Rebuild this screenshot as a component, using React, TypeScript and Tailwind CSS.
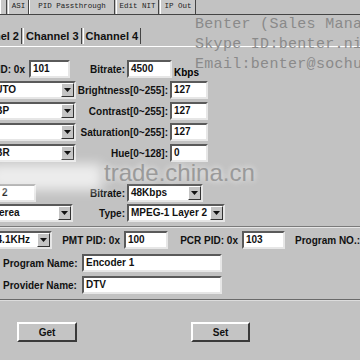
import React from 'react';

// Windows-Stil Konfigurationsfenster (Encoder-Kanal)

const Arrow = () => (
  <div className="w-[13px] h-full bg-[#c4c4c4] border border-t-white border-l-white border-b-[#333] border-r-[#333] flex items-center justify-center">
    <svg width="7" height="4" viewBox="0 0 7 4">
      <path d="M0 0h7L3.5 4z" fill="#111" />
    </svg>
  </div>
);

const Field: React.FC<{ className?: string; text?: string; select?: boolean; shift?: string }> = ({
  className = '',
  text = '',
  select = false,
  shift = '',
}) => (
  <div
    className={`h-[18px] shrink-0 bg-white border-2 border-t-[#5a5a5a] border-l-[#5a5a5a] border-b-[#e6e6e6] border-r-[#e6e6e6] flex items-stretch overflow-hidden ${className}`}
  >
    <span className={`flex-1 pl-[2px] text-[10px] font-bold leading-[14px] text-[#111] whitespace-nowrap overflow-hidden ${shift}`}>
      {text}
    </span>
    {select && <Arrow />}
  </div>
);

const Label: React.FC<{ className?: string; children: React.ReactNode }> = ({ className = '', children }) => (
  <div className={`shrink-0 flex justify-end overflow-hidden whitespace-nowrap text-[10px] font-bold text-[#111] pr-[2px] ${className}`}>
    <span>{children}</span>
  </div>
);

const Tab: React.FC<{ className?: string; children?: React.ReactNode }> = ({ className = '', children }) => (
  <div
    className={`h-[14px] shrink-0 flex items-center justify-center border-l border-r border-l-white border-r-[#444] bg-[#c8c8c8] text-[7.5px] text-[#222] ${className}`}
    style={{ fontFamily: '"Liberation Mono", monospace' }}
  >
    {children}
  </div>
);

const App: React.FC = () => {
  return (
    <div
      className="relative w-[360px] h-[360px] overflow-hidden bg-[#c2c2c2]"
      style={{ fontFamily: '"Liberation Sans", Arial, sans-serif' }}
    >
      {/* obere Registerkarten */}
      <div className="h-[15px] flex border-b border-b-[#444]">
        <Tab className="w-[7px]" />
        <Tab className="w-[21px] ml-[1px]">ASI</Tab>
        <Tab className="w-[86px]">PID Passthrough</Tab>
        <Tab className="w-[43px] ml-[1px]">Edit NIT</Tab>
        <Tab className="w-[36px] ml-[1px]">IP Out</Tab>
      </div>

      {/* Kanal-Registerkarten */}
      <div className="mt-[13px] h-[16px] flex text-[11px] font-bold text-[#111] whitespace-nowrap">
        <div className="w-[22px] flex justify-end overflow-hidden border-r border-r-[#444] pr-[2px]">
          <span>Channel 2</span>
        </div>
        <div className="ml-[1px] px-[2px] border-l border-l-white border-r border-r-[#444]">Channel 3</div>
        <div className="px-[2px] ml-[1px] border-l border-l-white border-r border-r-[#444]">Channel 4</div>
      </div>
      <div className="h-[1px] bg-white mt-[2px]" />

      {/* Video */}
      <div className="mt-[13px] h-[18px] flex items-center">
        <Label className="w-[29px] pr-[4px]">Video PID: 0x</Label>
        <Field className="w-[41px]" text="101" />
        <Label className="w-[57px]">Bitrate:</Label>
        <Field className="w-[45px]" text="4500" />
        <span className="self-end text-[10px] font-bold leading-[10px] ml-[2px]">Kbps</span>
      </div>

      {[
        ['AUTO', 'Brightness[0~255]:', '127'],
        ['CBP', 'Contrast[0~255]:', '127'],
        ['', 'Saturation[0~255]:', '127'],
        ['CBR', 'Hue[0~128]:', '0'],
      ].map(([sel, label, val]) => (
        <div key={label} className="mt-[3px] h-[18px] flex items-center">
          <div className="w-[76px] overflow-hidden shrink-0 flex justify-end">
            <Field className="w-[92px]" text={sel} select />
          </div>
          <Label className="w-[94px]">{label}</Label>
          <Field className="w-[38px]" text={val} />
        </div>
      ))}

      {/* Audio */}
      <div className="mt-[22px] h-[18px] flex items-center">
        <div className="w-[36px] overflow-hidden shrink-0 flex justify-end">
          <Field className="w-[60px] border-0" text="2" shift="pl-[24px]" />
        </div>
        <Label className="w-[91px]">Bitrate:</Label>
        <Field className="w-[76px]" text="48Kbps" select />
      </div>

      <div className="mt-[2px] h-[18px] flex items-center">
        <div className="w-[73px] overflow-hidden shrink-0 flex justify-end">
          <Field className="w-[88px]" text="Sterea" select />
        </div>
        <Label className="w-[54px]">Type:</Label>
        <Field className="w-[98px]" text="MPEG-1 Layer 2" select />
      </div>

      <div className="mt-[4px] h-[1px] bg-[#7a7a7a]" />
      <div className="h-[1px] bg-[#e6e6e6]" />

      {/* PIDs */}
      <div className="mt-[3px] h-[18px] flex items-center whitespace-nowrap">
        <div className="w-[52px] overflow-hidden shrink-0 flex justify-end">
          <Field className="w-[65px]" text="44.1KHz" select />
        </div>
        <Label className="w-[72px] pr-[4px]">PMT PID: 0x</Label>
        <Field className="w-[44px]" text="100" />
        <Label className="w-[74px] pr-[4px]">PCR PID: 0x</Label>
        <Field className="w-[43px]" text="103" />
        <span className="ml-[10px] text-[10px] font-bold text-[#111]">Program NO.:</span>
      </div>

      <div className="mt-[5px] h-[18px] flex items-center">
        <Label className="w-[80px] pr-[4px] justify-start pl-[3px]">Program Name:</Label>
        <Field className="w-[140px] ml-[2px]" text="Encoder 1" />
      </div>
      <div className="mt-[4px] h-[18px] flex items-center">
        <Label className="w-[80px] pr-[4px] justify-start pl-[3px]">Provider Name:</Label>
        <Field className="w-[140px] ml-[2px]" text="DTV" />
      </div>

      <div className="mt-[5px] h-[1px] bg-[#6a6a6a]" />
      <div className="h-[1px] bg-[#dcdcdc]" />

      {/* Schaltflächen */}
      <div className="mt-[21px] flex">
        <button className="ml-[17px] w-[60px] h-[20px] bg-[#c4c4c4] border-2 border-t-white border-l-white border-b-[#3a3a3a] border-r-[#3a3a3a] text-[10px] font-bold text-[#111]">
          Get
        </button>
        <button className="ml-[114px] w-[59px] h-[20px] bg-[#c4c4c4] border-2 border-t-white border-l-white border-b-[#3a3a3a] border-r-[#3a3a3a] text-[10px] font-bold text-[#111]">
          Set
        </button>
      </div>

      {/* Wasserzeichen */}
      <div className="absolute left-[-10px] top-[164px] w-[112px] h-[26px] bg-white/70 blur-[6px]" />
      <div className="absolute left-[104px] top-[155px] text-[24px] text-[#9a9a9a] [text-shadow:0_0_6px_rgba(255,255,255,0.9)]">
        trade.china.cn
      </div>
      <div
        className="absolute left-[195px] top-[15px] text-[15px] leading-[20px] tracking-[0.3px] text-[#8a8a8a] whitespace-nowrap"
        style={{ fontFamily: '"Liberation Mono", monospace' }}
      >
        <div>Benter (Sales Manager)</div>
        <div>Skype ID:benter.nie</div>
        <div>Email:benter@sochuang.com</div>
      </div>
    </div>
  );
};

export default App;
